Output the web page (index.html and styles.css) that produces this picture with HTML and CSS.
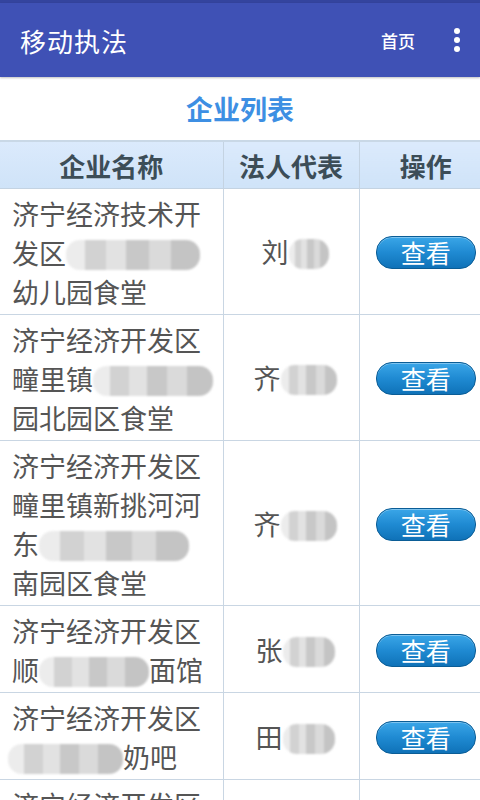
FILE: index.html
```html
<!DOCTYPE html>
<html lang="zh-CN">
<head>
<meta charset="utf-8">
<title>移动执法</title>
<link rel="stylesheet" href="styles.css">
</head>
<body>
<div class="status"></div>
<header class="toolbar">
  <div class="title">移动执法</div>
  <div class="home">首页</div>
  <div class="more"><i></i><i></i><i></i></div>
</header>
<h1 class="page-title">企业列表</h1>
<table class="list">
  <colgroup><col class="c1"><col class="c2"><col class="c3"></colgroup>
  <thead>
    <tr><th>企业名称</th><th>法人代表</th><th class="op">操作</th></tr>
  </thead>
  <tbody>
    <tr>
      <td class="name">济宁经济技术开<br>发区<span class="mosaic w134"></span><br>幼儿园食堂</td>
      <td class="person">刘<span class="mosaic w40"></span></td>
      <td class="act"><span class="btn">查看</span></td>
    </tr>
    <tr>
      <td class="name">济宁经济开发区<br>疃里镇<span class="mosaic w120"></span><br>园北园区食堂</td>
      <td class="person">齐<span class="mosaic w56"></span></td>
      <td class="act"><span class="btn">查看</span></td>
    </tr>
    <tr>
      <td class="name">济宁经济开发区<br>疃里镇新挑河河<br>东<span class="mosaic w150"></span><br>南园区食堂</td>
      <td class="person">齐<span class="mosaic w56"></span></td>
      <td class="act"><span class="btn">查看</span></td>
    </tr>
    <tr>
      <td class="name">济宁经济开发区<br>顺<span class="mosaic w110"></span>面馆</td>
      <td class="person">张<span class="mosaic w52"></span></td>
      <td class="act"><span class="btn">查看</span></td>
    </tr>
    <tr>
      <td class="name">济宁经济开发区<br><span class="mosaic w115 lead"></span>奶吧</td>
      <td class="person">田<span class="mosaic w52"></span></td>
      <td class="act"><span class="btn">查看</span></td>
    </tr>
    <tr>
      <td class="name">济宁经济开发区<br>&nbsp;</td>
      <td class="person"></td>
      <td class="act"></td>
    </tr>
  </tbody>
</table>
</body>
</html>
```

FILE: styles.css
```css
html, body {
  margin: 0;
  padding: 0;
  background: #ffffff;
  font-family: "Noto Sans CJK SC", "Noto Sans", sans-serif;
  width: 480px;
  height: 800px;
  overflow: hidden;
}

.status {
  height: 3px;
  background: #34449e;
}

.toolbar {
  height: 74px;
  background: #3f51b5;
  display: flex;
  align-items: center;
  padding: 0 18px 0 20px;
  color: #ffffff;
  box-shadow: 0 1px 2px rgba(0, 0, 0, 0.25);
}

.title {
  font-size: 26px;
  flex: 1;
  letter-spacing: 1px;
}

.home {
  font-size: 17px;
  font-weight: 500;
  margin-right: 37px;
}

.more {
  display: flex;
  flex-direction: column;
  gap: 3px;
  width: 10px;
  align-items: center;
}

.more i {
  display: block;
  width: 6px;
  height: 6px;
  border-radius: 50%;
  background: #ffffff;
}

.page-title {
  margin: 0;
  height: 63px;
  line-height: 63px;
  text-align: center;
  font-size: 27px;
  font-weight: bold;
  color: #3d8fe3;
}

.list {
  width: 480px;
  border-collapse: collapse;
  table-layout: fixed;
}

.c1 { width: 223px; }
.c2 { width: 136px; }
.c3 { width: 121px; }

.list th {
  height: 46px;
  padding: 0;
  background: linear-gradient(#dbeafc, #cfe3f8);
  color: #3c4d57;
  font-size: 26px;
  font-weight: bold;
  border: 1px solid #c4d3e2;
  border-top: 2px solid #c9d8e6;
}

.list th.op {
  padding-left: 12px;
}

.list td {
  border: 1px solid #c9d6e3;
  color: #555555;
  font-size: 27px;
  line-height: 39px;
}

.list tr > :first-child { border-left: none; }
.list tr > :last-child { border-right: none; }

.name {
  padding: 5px 6px 3px 12px;
  vertical-align: top;
  white-space: nowrap;
}

.person {
  text-align: center;
  vertical-align: middle;
  padding: 0 0 0 8px;
}

.act {
  text-align: center;
  vertical-align: middle;
  padding: 0 0 0 12px;
}

.btn {
  display: inline-block;
  width: 98px;
  height: 31px;
  line-height: 30px;
  border-radius: 16px;
  background: linear-gradient(#3aa6e8, #1f8ad2 50%, #0f72b8);
  border: 1px solid #0b5d96;
  color: #ffffff;
  font-size: 25px;
  box-shadow: inset 0 1px 0 rgba(255, 255, 255, 0.35);
}

.mosaic {
  display: inline-block;
  height: 30px;
  vertical-align: -6px;
  border-radius: 14px;
  background:
    linear-gradient(90deg,
      #ececec 0, #ececec 14%,
      #d2d2d2 14%, #d2d2d2 30%,
      #e2e2e2 30%, #e2e2e2 45%,
      #c8c8c8 45%, #c8c8c8 62%,
      #dadada 62%, #dadada 78%,
      #c4c4c4 78%, #c4c4c4 100%);
  filter: blur(1px);
}

.mosaic.lead { margin-left: -4px; }

.w40 { width: 40px; }
.w52 { width: 52px; }
.w56 { width: 56px; }
.w110 { width: 110px; }
.w115 { width: 115px; }
.w120 { width: 120px; }
.w134 { width: 134px; }
.w150 { width: 150px; }
```
